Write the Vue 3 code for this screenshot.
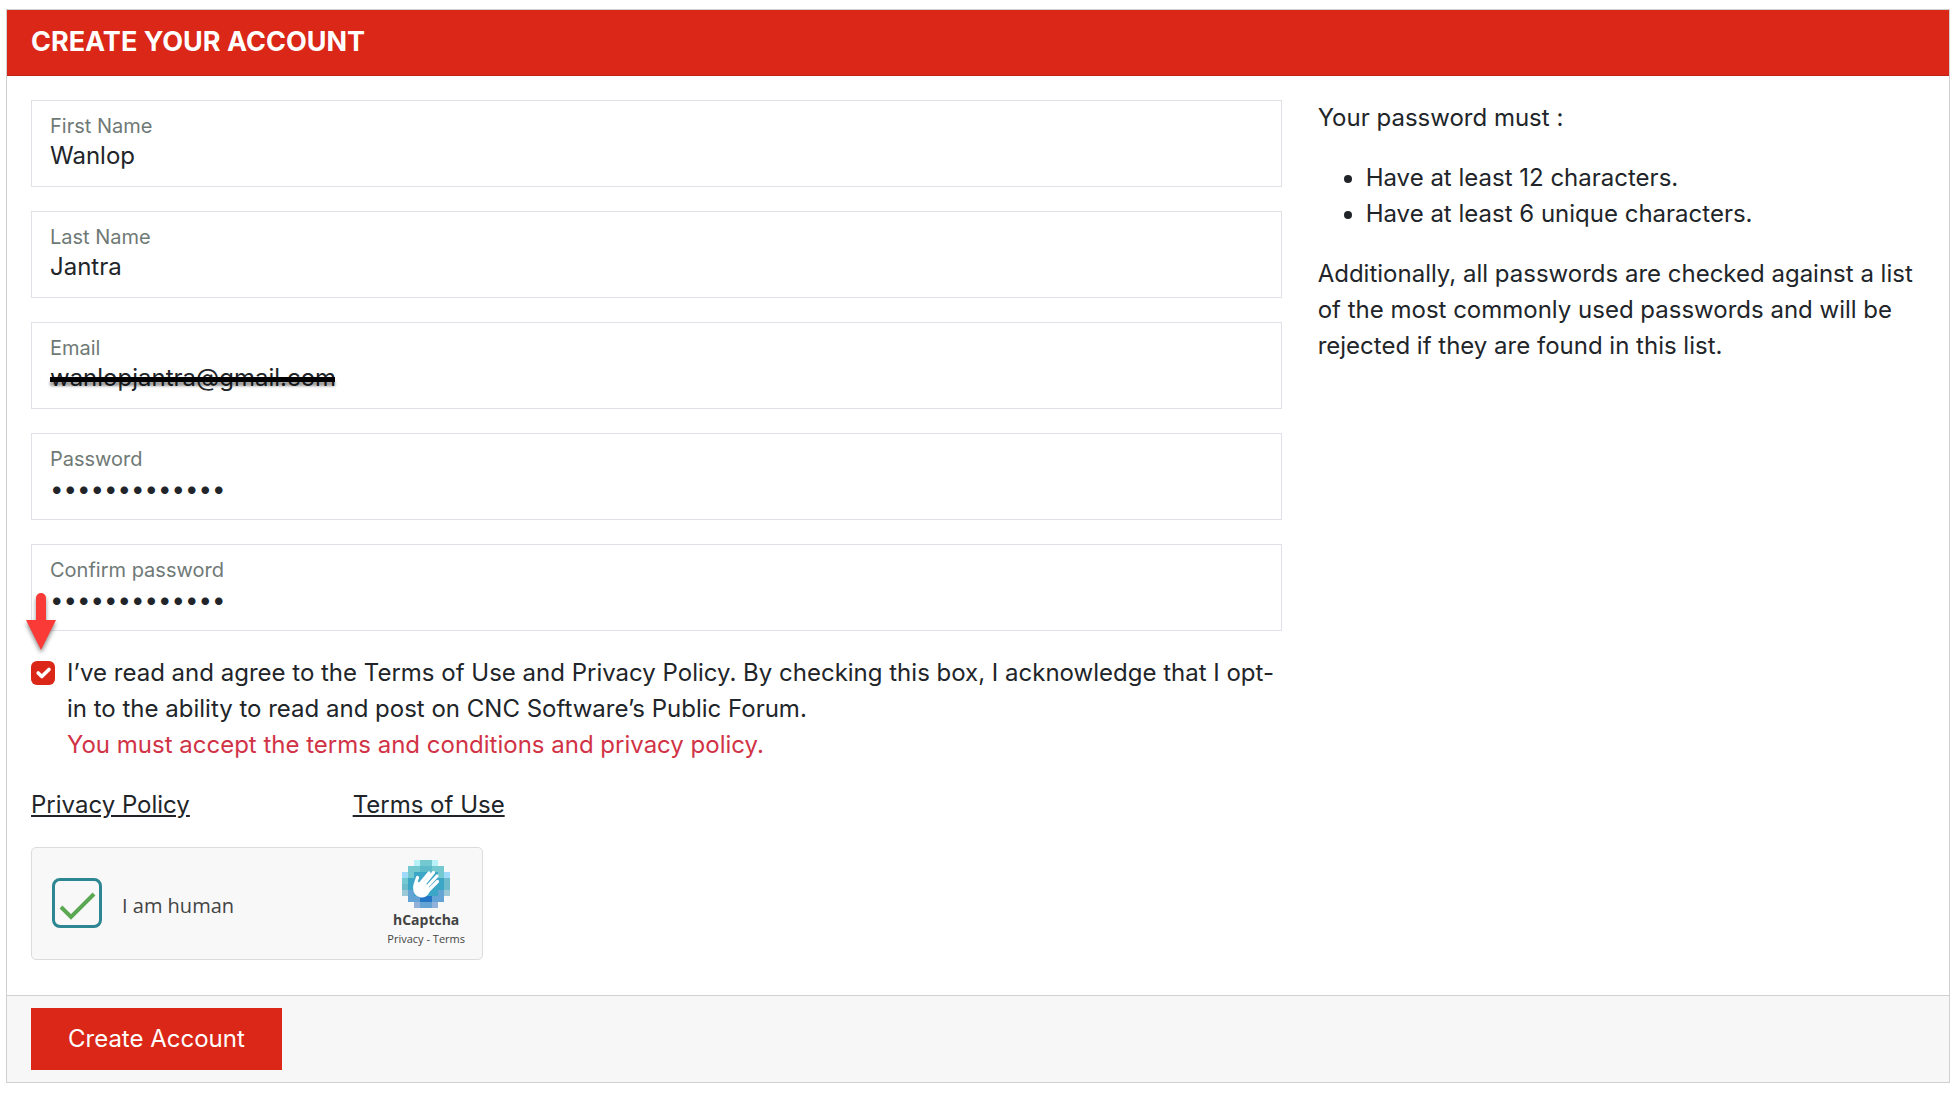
<script setup>
import { reactive } from 'vue'

const fields = reactive([
  { id: 'first-name', label: 'First Name', type: 'text', value: 'Wanlop' },
  { id: 'last-name', label: 'Last Name', type: 'text', value: 'Jantra' },
  { id: 'email', label: 'Email', type: 'text', value: 'wanlopjantra@gmail.com', redacted: true },
  { id: 'password', label: 'Password', type: 'password', value: 'Wanlop1234567' },
  { id: 'confirm', label: 'Confirm password', type: 'password', value: 'Wanlop1234567', marked: true },
])

// Logo mosaic: 8 x 8 tiles, one letter per colour
const mosaic = [
  '..atta..',
  '.ttmmtt.',
  'btcccctb',
  'tccccccT',
  'TccccccT',
  'gdccccdg',
  '.ddeedd.',
  '..hddh..',
]
const colours = {
  a: '#b8f2f8', t: '#74c8cf', T: '#6ebccb', m: '#5dbac9', b: '#a0dafb',
  c: '#3ba6c5', g: '#9bc9d6', d: '#63a4d4', e: '#2376c6', h: '#92b2dc',
}
const tiles = mosaic.flatMap((row, y) =>
  [...row].map((key, x) => ({ x, y, fill: colours[key] })).filter((tile) => tile.fill),
)
</script>

<template>
  <main class="page">
    <form class="card" @submit.prevent>
      <header class="card-header">
        <h1>CREATE YOUR ACCOUNT</h1>
      </header>

      <div class="card-body">
        <div class="main">
          <div v-for="field in fields" :key="field.id" class="field">
            <label :for="field.id">{{ field.label }}</label>
            <input :id="field.id" v-model="field.value" :type="field.type" autocomplete="off" spellcheck="false" />
            <span v-if="field.redacted" class="strike"></span>
            <svg v-if="field.marked" class="arrow" viewBox="0 0 40 68" aria-hidden="true">
              <path d="M15 10a5 5 0 0 1 10 0V32H35L20 62L5 32H15Z" fill="#f93a37" />
            </svg>
          </div>

          <div class="agree">
            <input id="agree" type="checkbox" checked />
            <div>
              <label for="agree">I’ve read and agree to the Terms of Use and Privacy Policy. By checking this box, I acknowledge that I opt-in to the ability to read and post on CNC Software’s Public Forum.</label>
              <p class="error">You must accept the terms and conditions and privacy policy.</p>
            </div>
          </div>

          <nav class="links">
            <a href="#privacy">Privacy Policy</a>
            <a href="#terms">Terms of Use</a>
          </nav>

          <div class="captcha">
            <input id="human" type="checkbox" checked />
            <label for="human">I am human</label>
            <div class="brand">
              <svg class="logo" viewBox="0 0 48 48" aria-hidden="true">
                <rect
                  v-for="tile in tiles"
                  :key="`${tile.x}-${tile.y}`"
                  :x="tile.x * 6"
                  :y="tile.y * 6"
                  width="6"
                  height="6"
                  :fill="tile.fill"
                  shape-rendering="crispEdges"
                />
                <path d="M11 27L14 20L17.500 23L22 21L28 29L27 33Q24 38 19 37.500Q11 36.500 11 27Z" fill="#fff" />
                <path
                  d="M15.500 17.500L13 25M27 13L17 25M31.500 12.500L21 25.500M35 16L23 29M35.500 21.500L25 32"
                  fill="none"
                  stroke="#fff"
                  stroke-width="3.200"
                  stroke-linecap="round"
                />
              </svg>
              <strong>hCaptcha</strong>
              <small><a href="#captcha-privacy">Privacy</a> - <a href="#captcha-terms">Terms</a></small>
            </div>
          </div>
        </div>

        <aside class="rules">
          <p>Your password must :</p>
          <ul>
            <li>Have at least 12 characters.</li>
            <li>Have at least 6 unique characters.</li>
          </ul>
          <p>Additionally, all passwords are checked against a list of the most commonly used passwords and will be rejected if they are found in this list.</p>
        </aside>
      </div>

      <footer class="card-footer">
        <button type="submit">Create Account</button>
      </footer>
    </form>
  </main>
</template>

<style>
body {
  background: #fff;
}
</style>

<style scoped>
* {
  box-sizing: border-box;
}

.page {
  padding: 9px 8px 15px 6px;
  color: #212529;
  font: 24px/36px Inter, "Liberation Sans", sans-serif;
}

h1,
p,
ul {
  margin: 0;
}

input,
button {
  font: inherit;
  color: inherit;
}

.card {
  border: 1px solid #d0d0d0;
}

.card-header {
  padding: 12px 24px 14px;
  border-bottom: 1px solid #c02217;
  background: #da2717;
  color: #fff;
}

h1 {
  font-size: 27px;
  font-weight: 700;
  line-height: 39px;
}

.card-body {
  display: grid;
  grid-template-columns: repeat(12, minmax(0, 1fr));
  column-gap: 36px;
  padding: 24px 24px 35px;
}

.main {
  grid-column: span 8;
  display: flex;
  flex-direction: column;
  gap: 24px;
}

.rules {
  grid-column: span 4;
  display: flex;
  flex-direction: column;
  gap: 24px;
}

.rules ul {
  padding-left: 48px;
}

.field {
  position: relative;
  display: flex;
  flex-direction: column;
  height: 87px;
  padding: 10px 18px;
  border: 1px solid #dee2e6;
}

.field label {
  color: #6f7976;
  font-size: 20px;
  line-height: 30px;
}

.field input {
  width: 100%;
  height: 30px;
  padding: 0;
  border: 0;
  outline: 0;
  background: none;
}

.strike {
  position: absolute;
  top: 54px;
  left: 18px;
  width: 285px;
  height: 5px;
  background: #000;
  box-shadow: 0 4px 3px rgba(0, 0, 0, 0.4);
}

.arrow {
  position: absolute;
  left: -11px;
  top: 43px;
  width: 40px;
  height: 68px;
  overflow: visible;
  filter: drop-shadow(0 3px 2px rgba(0, 0, 0, 0.45));
}

.agree {
  display: flex;
  gap: 12px;
}

.agree input {
  flex: none;
  appearance: none;
  width: 24px;
  height: 24px;
  margin: 6px 0;
  border-radius: 6px;
  background: #da2717 url("data:image/svg+xml,%3Csvg xmlns='http://www.w3.org/2000/svg' viewBox='0 0 20 20'%3E%3Cpath fill='none' stroke='%23fff' stroke-linecap='round' stroke-linejoin='round' stroke-width='3' d='m6 10 3 3 6-6'/%3E%3C/svg%3E");
}

.error {
  color: #d13346;
}

.links {
  display: grid;
  grid-template-columns: repeat(4, minmax(0, 1fr));
  column-gap: 36px;
}

.links a {
  color: inherit;
  justify-self: start;
}

.captcha {
  display: flex;
  align-items: center;
  width: 452px;
  height: 113px;
  padding: 0 17px 2px 20px;
  border: 1px solid #dcdcdf;
  border-radius: 5px;
  background: #f8f8f8;
  color: #444;
  font-family: "Open Sans", "Noto Sans", sans-serif;
}

.captcha input {
  appearance: none;
  width: 50px;
  height: 50px;
  margin: 0 20px 0 0;
  border: 3px solid #2c8792;
  border-radius: 8px;
  background: url("data:image/svg+xml,%3Csvg xmlns='http://www.w3.org/2000/svg' viewBox='0 0 44 44'%3E%3Cpath fill='none' stroke='%235ba853' stroke-width='4' d='M6 26 16 36 39 13'/%3E%3C/svg%3E");
}

.captcha label {
  padding-top: 6px;
  font-size: 20px;
  line-height: 30px;
}

.brand {
  display: flex;
  flex-direction: column;
  align-items: center;
  margin-left: auto;
}

.logo {
  width: 48px;
  height: 48px;
}

.brand strong {
  font-size: 14px;
  line-height: 24px;
}

.brand small {
  font-size: 11px;
  line-height: 14px;
}

.brand a {
  color: inherit;
  text-decoration: none;
}

.card-footer {
  padding: 12px 24px;
  border-top: 1px solid #d0d0d0;
  background: #f7f7f7;
}

button {
  display: block;
  padding: 13px 37px;
  border: 0;
  border-radius: 0;
  background: #da2717;
  color: #fff;
}
</style>
